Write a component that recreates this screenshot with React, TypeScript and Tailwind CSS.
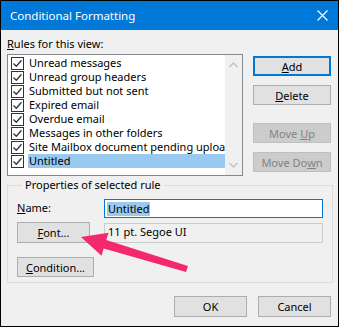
import React from 'react';

const rules = [
  'Unread messages',
  'Unread group headers',
  'Submitted but not sent',
  'Expired email',
  'Overdue email',
  'Messages in other folders',
  'Site Mailbox document pending upload',
  'Untitled',
];

const Check = () => (
  <span className="w-[13px] h-[13px] shrink-0 border border-[#333] bg-white flex items-center justify-center">
    <svg width="11" height="11" viewBox="0 0 11 11">
      <path d="M1.5 5.5 L4.3 8.3 L9.5 2.3" fill="none" stroke="#333" strokeWidth="1.3" />
    </svg>
  </span>
);

const Btn: React.FC<{ children: React.ReactNode; className?: string; disabled?: boolean; primary?: boolean }> = ({
  children,
  className = '',
  disabled,
  primary,
}) => (
  <button
    className={
      'flex items-center justify-center text-[11px] leading-none ' +
      (disabled
        ? 'bg-[#cccccc] border border-[#bfbfbf] text-[#838383] '
        : primary
          ? 'bg-[#e1e1e1] border-2 border-[#0078d7] text-black '
          : 'bg-[#e1e1e1] border border-[#adadad] text-black ') +
      className
    }
  >
    {children}
  </button>
);

export default function App() {
  return (
    <div className="relative w-[339px] h-[327px] border border-black bg-[#f0f0f0] overflow-hidden font-['Noto_Sans',sans-serif] text-[11px] text-black">
      <div className="h-[29px] bg-[#0078d7] flex items-center justify-between pl-[9px] pr-[10px] text-white">
        <span className="text-[11.5px]">Conditional Formatting</span>
        <svg width="11" height="11" viewBox="0 0 11 11">
          <path d="M0.5 0.5 L10.5 10.5 M10.5 0.5 L0.5 10.5" stroke="white" strokeWidth="1.2" />
        </svg>
      </div>

      <div className="pl-[6px] mt-[7px] leading-[14px]">
        <span className="underline">R</span>ules for this view:
      </div>

      <div className="flex mt-[3px] ml-[6px]">
        <div className="w-[236px] h-[122px] border border-[#828790] bg-white flex">
          <div className="flex-1 min-w-0 overflow-hidden flex flex-col pl-[3px] pt-[1px]">
            {rules.map((r, i) => (
              <div key={r} className="h-[14px] flex items-center gap-[4px]">
                <Check />
                <span
                  className={
                    'h-[14px] flex-1 min-w-0 whitespace-nowrap overflow-hidden leading-[14px] pl-[1px] ' +
                    (i === rules.length - 1 ? 'bg-[#99c9ef]' : '')
                  }
                >
                  {r}
                </span>
              </div>
            ))}
          </div>
          <div className="w-[17px] shrink-0 bg-[#f0f0f0] flex flex-col justify-between items-center py-[7px]">
            <svg width="9" height="6" viewBox="0 0 9 6">
              <path d="M0.5 5 L4.5 1 L8.5 5" fill="none" stroke="#c2c2c2" strokeWidth="1.3" />
            </svg>
            <svg width="9" height="6" viewBox="0 0 9 6">
              <path d="M0.5 1 L4.5 5 L8.5 1" fill="none" stroke="#c2c2c2" strokeWidth="1.3" />
            </svg>
          </div>
        </div>

        <div className="ml-[10px] w-[78px] flex flex-col">
          <Btn primary className="mt-[2px] h-[20px]">
            <span className="underline">A</span>dd
          </Btn>
          <Btn className="mt-[9px] h-[20px]">
            <span className="underline">D</span>elete
          </Btn>
          <Btn disabled className="mt-[18px] h-[20px]">
            Move&nbsp;<span className="underline">U</span>p
          </Btn>
          <Btn disabled className="mt-[9px] h-[20px]">
            Move Do<span className="underline">w</span>n
          </Btn>
        </div>
      </div>

      <fieldset className="ml-[6px] mt-[2px] w-[326px] border border-[#dcdcdc] pl-[9px] pr-[9px] pt-[7px] pb-[5px]">
        <legend className="ml-[5px] px-[3px] leading-[14px]">Properties of selected rule</legend>
        <div className="flex items-center">
          <span className="w-[87px]">
            <span className="underline">N</span>ame:
          </span>
          <div className="w-[219px] h-[19px] border border-[#0078d7] bg-white flex items-center pl-[2px]">
            <span className="bg-[#99c9ef] leading-[14px] px-[1px]">Untitled</span>
          </div>
        </div>
        <div className="flex items-center mt-[4px]">
          <Btn className="w-[73px] h-[21px]">
            <span className="underline">F</span>ont...
          </Btn>
          <div className="ml-[14px] w-[219px] h-[20px] border border-[#cccccc] flex items-center pl-[3px]">
            11 pt. Segoe UI
          </div>
        </div>
        <Btn className="mt-[14px] w-[77px] h-[20px]">
          <span className="underline">C</span>ondition...
        </Btn>
      </fieldset>

      <div className="flex justify-end gap-[11px] pr-[7px] mt-[13px]">
        <Btn className="w-[73px] h-[21px]">OK</Btn>
        <Btn className="w-[73px] h-[21px]">Cancel</Btn>
      </div>

      <svg className="absolute left-0 top-0 pointer-events-none" width="339" height="327" viewBox="0 0 339 327">
        <polygon
          points="80,236 107.5,231.7 105.3,238.9 186.9,265.1 185.1,270.9 102.7,247.5 100.5,254.7"
          fill="#f5286e"
        />
      </svg>
    </div>
  );
}
